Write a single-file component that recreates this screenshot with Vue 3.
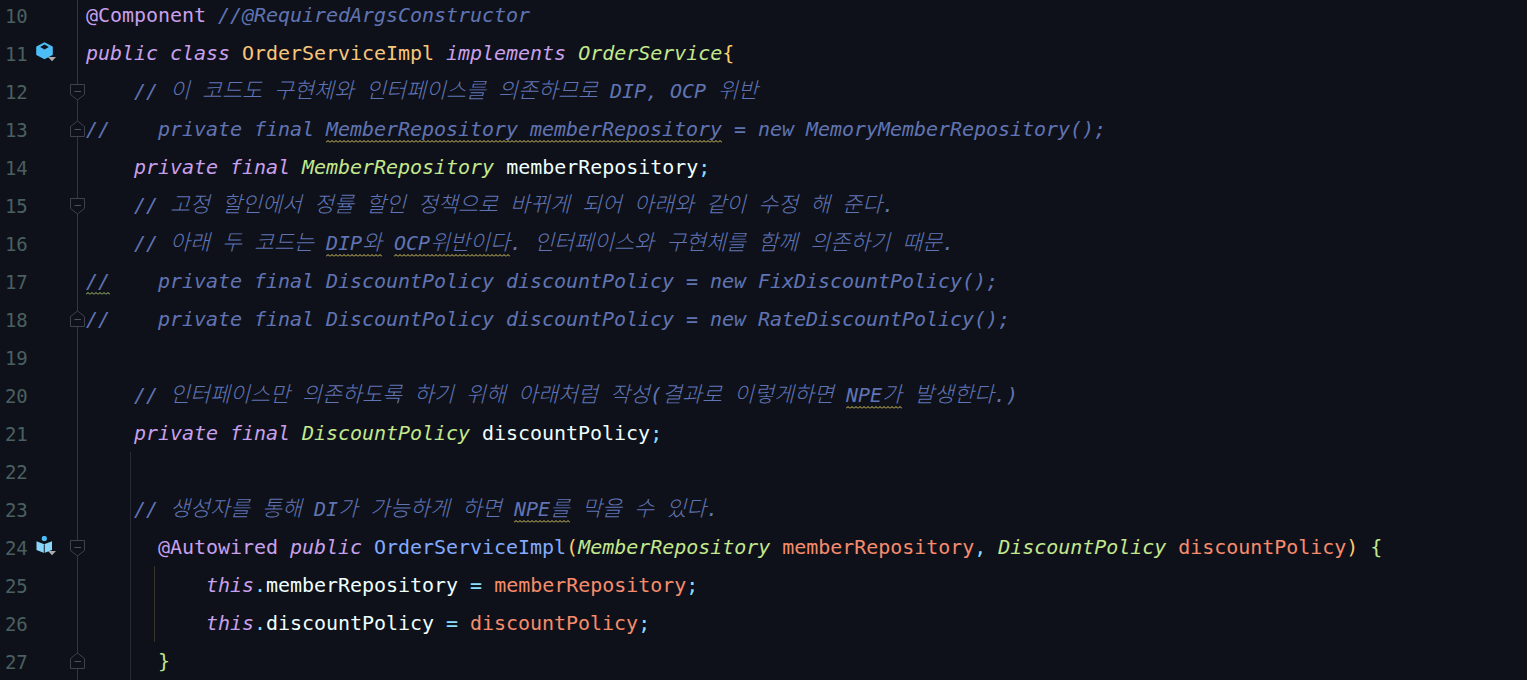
<script setup>
const kw = 'kw', ty = 'ty', cm = 'cm', vr = 'vr', pa = 'pa', pu = 'pu'
const rows = [
  { n: 10, t: [['@Component', 'an'], [' '], ['//@RequiredArgsConstructor', cm]] },
  { n: 11, mark: 'cube', t: [['public', kw], [' '], ['class', kw], [' '], ['OrderServiceImpl', 'dc'], [' '], ['implements', kw], [' '], ['OrderService', ty], ['{', 'br']] },
  { n: 12, fold: 'down', t: [['    '], ['// 이 코드도 구현체와 인터페이스를 의존하므로 DIP, OCP 위반', cm]] },
  { n: 13, fold: 'up', t: [['//    private final ', cm], ['MemberRepository memberRepository', cm + ' sq'], [' = new MemoryMemberRepository();', cm]] },
  { n: 14, t: [['    '], ['private', kw], [' '], ['final', kw], [' '], ['MemberRepository', ty], [' '], ['memberRepository', vr], [';', pu]] },
  { n: 15, fold: 'down', t: [['    '], ['// 고정 할인에서 정률 할인 정책으로 바뀌게 되어 아래와 같이 수정 해 준다.', cm]] },
  { n: 16, t: [['    '], ['// 아래 두 코드는 ', cm], ['DIP와', cm + ' sq'], [' ', cm], ['OCP위반이다', cm + ' sq'], ['. 인터페이스와 구현체를 함께 의존하기 때문.', cm]] },
  { n: 17, t: [['//', cm + ' sg'], ['    private final DiscountPolicy discountPolicy = new FixDiscountPolicy();', cm]] },
  { n: 18, fold: 'up', t: [['//    private final DiscountPolicy discountPolicy = new RateDiscountPolicy();', cm]] },
  { n: 19, t: [] },
  { n: 20, t: [['    '], ['// 인터페이스만 의존하도록 하기 위해 아래처럼 작성(결과로 이렇게하면 ', cm], ['NPE가', cm + ' sq'], [' 발생한다.)', cm]] },
  { n: 21, t: [['    '], ['private', kw], [' '], ['final', kw], [' '], ['DiscountPolicy', ty], [' '], ['discountPolicy', vr], [';', pu]] },
  { n: 22, guide: true, t: [] },
  { n: 23, guide: true, t: [['    '], ['// 생성자를 통해 DI가 가능하게 하면 ', cm], ['NPE를', cm + ' sq'], [' 막을 수 있다.', cm]] },
  { n: 24, guide: true, mark: 'book', fold: 'down', t: [['      '], ['@Autowired', 'an'], [' '], ['public', kw], [' '], ['OrderServiceImpl', 'fn'], ['(', 'br'], ['MemberRepository', ty], [' '], ['memberRepository', pa], [',', pu], [' '], ['DiscountPolicy', ty], [' '], ['discountPolicy', pa], [')', 'br'], [' '], ['{', 'gb']] },
  { n: 25, guide: true, inner: true, t: [['          '], ['this', kw], ['.', pu], ['memberRepository', vr], [' '], ['=', pu], [' '], ['memberRepository', pa], [';', pu]] },
  { n: 26, guide: true, inner: true, t: [['          '], ['this', kw], ['.', pu], ['discountPolicy', vr], [' '], ['=', pu], [' '], ['discountPolicy', pa], [';', pu]] },
  { n: 27, guide: true, fold: 'up', t: [['      '], ['}', 'gb']] },
]
const parts = (s) => s.split(/([\uac00-\ud7a3]+)/).filter(Boolean).map((x) => ({ x, h: /[\uac00-\ud7a3]/.test(x) }))
</script>

<template>
  <div class="editor">
    <div v-for="r in rows" :key="r.n" class="row" :class="{ guide: r.guide, inner: r.inner }">
      <div class="num">{{ r.n }}</div>
      <div class="mark">
        <svg v-if="r.mark === 'cube'" width="21" height="20" viewBox="0 0 21 20">
          <path d="M8.5 .3 16.2 4.3Q16.8 4.6 16.8 5.3V12.2Q16.8 13 16.2 13.3L8.5 17.2.8 13.3Q.2 13 .2 12.2V5.3Q.2 4.6.8 4.3Z" fill="#4dbdf7" />
          <path d="M8.5 2.6 12.8 5 8.5 7.4 4.2 5Z" fill="#0e1119" />
          <path d="M12 15h8l-4 4.2Z" fill="#a9abad" />
        </svg>
        <svg v-else-if="r.mark === 'book'" width="21" height="20" viewBox="0 0 21 20">
          <circle cx="8.3" cy="2.5" r="2.6" fill="#4dbdf7" />
          <path d="M.5 5.2 8.2 8.2 16 5.2V14L8.2 17 .5 14Z" fill="#8ad6fb" />
          <path d="M7.8 8.4h.9V17h-.9Z" fill="#0e1119" />
          <path d="M12 15h8l-4 4.2Z" fill="#a9abad" />
        </svg>
      </div>
      <div class="fold">
        <svg v-if="r.fold === 'down'" class="fi" width="15" height="17" viewBox="0 0 15 17">
          <path d="M.5.5H14.5V10.5L7.5 16 .5 10.5Z" fill="#0e1119" stroke="#3f414b" />
          <path d="M4.5 7.5H11" stroke="#50525b" />
        </svg>
        <svg v-else-if="r.fold === 'up'" class="fi up" width="15" height="17" viewBox="0 0 15 17">
          <path d="M.5 16.5H14.5V6.5L7.5 1 .5 6.5Z" fill="#0e1119" stroke="#3f414b" />
          <path d="M4.5 9.5H11" stroke="#50525b" />
        </svg>
      </div>
      <div class="code"><span v-for="(k, i) in r.t" :key="i" :class="k[1]"><span v-for="(p, j) in parts(k[0])" :key="j" :class="{ h: p.h }">{{ p.x }}</span></span></div>
    </div>
  </div>
</template>

<style>
html, body { margin: 0; background: #0e1119; overflow: hidden; }
</style>

<style scoped>
.editor {
  margin-top: -4px;
  width: 1527px;
  background: #0e1119;
  font-family: "DejaVu Sans Mono", monospace;
}
.row { position: relative; display: flex; height: 38px; line-height: 38px; }
.num {
  width: 31px;
  padding: 1px 0 0 5px;
  height: 37px;
  font-size: 19px;
  letter-spacing: -0.2px;
  color: #4a6060;
}
.mark { position: relative; width: 34px; }
.mark svg { position: absolute; left: 0; top: 8px; }
.fold { position: relative; width: 16px; }
.fold::before {
  content: "";
  position: absolute;
  left: 7px;
  top: 0;
  bottom: 0;
  width: 1px;
  background: #34363f;
}
.fi { position: absolute; left: 0; top: 12px; }
.fi.up { top: 10px; }
.code {
  font-size: 20px;
  letter-spacing: -0.04px;
  white-space: pre;
  color: #eeffff;
}
.h {
  font-family: "Noto Sans CJK KR", sans-serif;
  font-size: 21.74px;
  line-height: 0;
  letter-spacing: 0;
  font-weight: 300;
}
.guide::before {
  content: "";
  position: absolute;
  left: 130px;
  top: 0;
  bottom: 0;
  width: 1px;
  background: #2a2c35;
}
.inner::after {
  content: "";
  position: absolute;
  left: 154px;
  top: 0;
  bottom: 0;
  width: 1px;
  background: #34372a;
}
.kw { color: #c8a0ec; font-style: italic; }
.an { color: #c8a0ec; }
.ty { color: #c3e88d; font-style: italic; }
.dc { color: #f8c57c; }
.fn { color: #82aaff; }
.br { color: #ffcb6b; }
.gb { color: #c3e88d; }
.vr { color: #eeffff; }
.pa { color: #f78c6c; }
.pu { color: #89ddff; }
.cm { color: #6074b4; font-style: italic; }
.sq {
  padding-bottom: 2px;
  background: url("data:image/svg+xml,%3Csvg xmlns='http://www.w3.org/2000/svg' width='4' height='3'%3E%3Cpath d='M0 2.5 2 .5 4 2.5' fill='none' stroke='%23dcc860' stroke-width='1'/%3E%3C/svg%3E") repeat-x left bottom;
}
.sg {
  padding-bottom: 2px;
  background: url("data:image/svg+xml,%3Csvg xmlns='http://www.w3.org/2000/svg' width='4' height='3'%3E%3Cpath d='M0 2.5 2 .5 4 2.5' fill='none' stroke='%23b0cc68' stroke-width='1'/%3E%3C/svg%3E") repeat-x left bottom;
}
</style>
